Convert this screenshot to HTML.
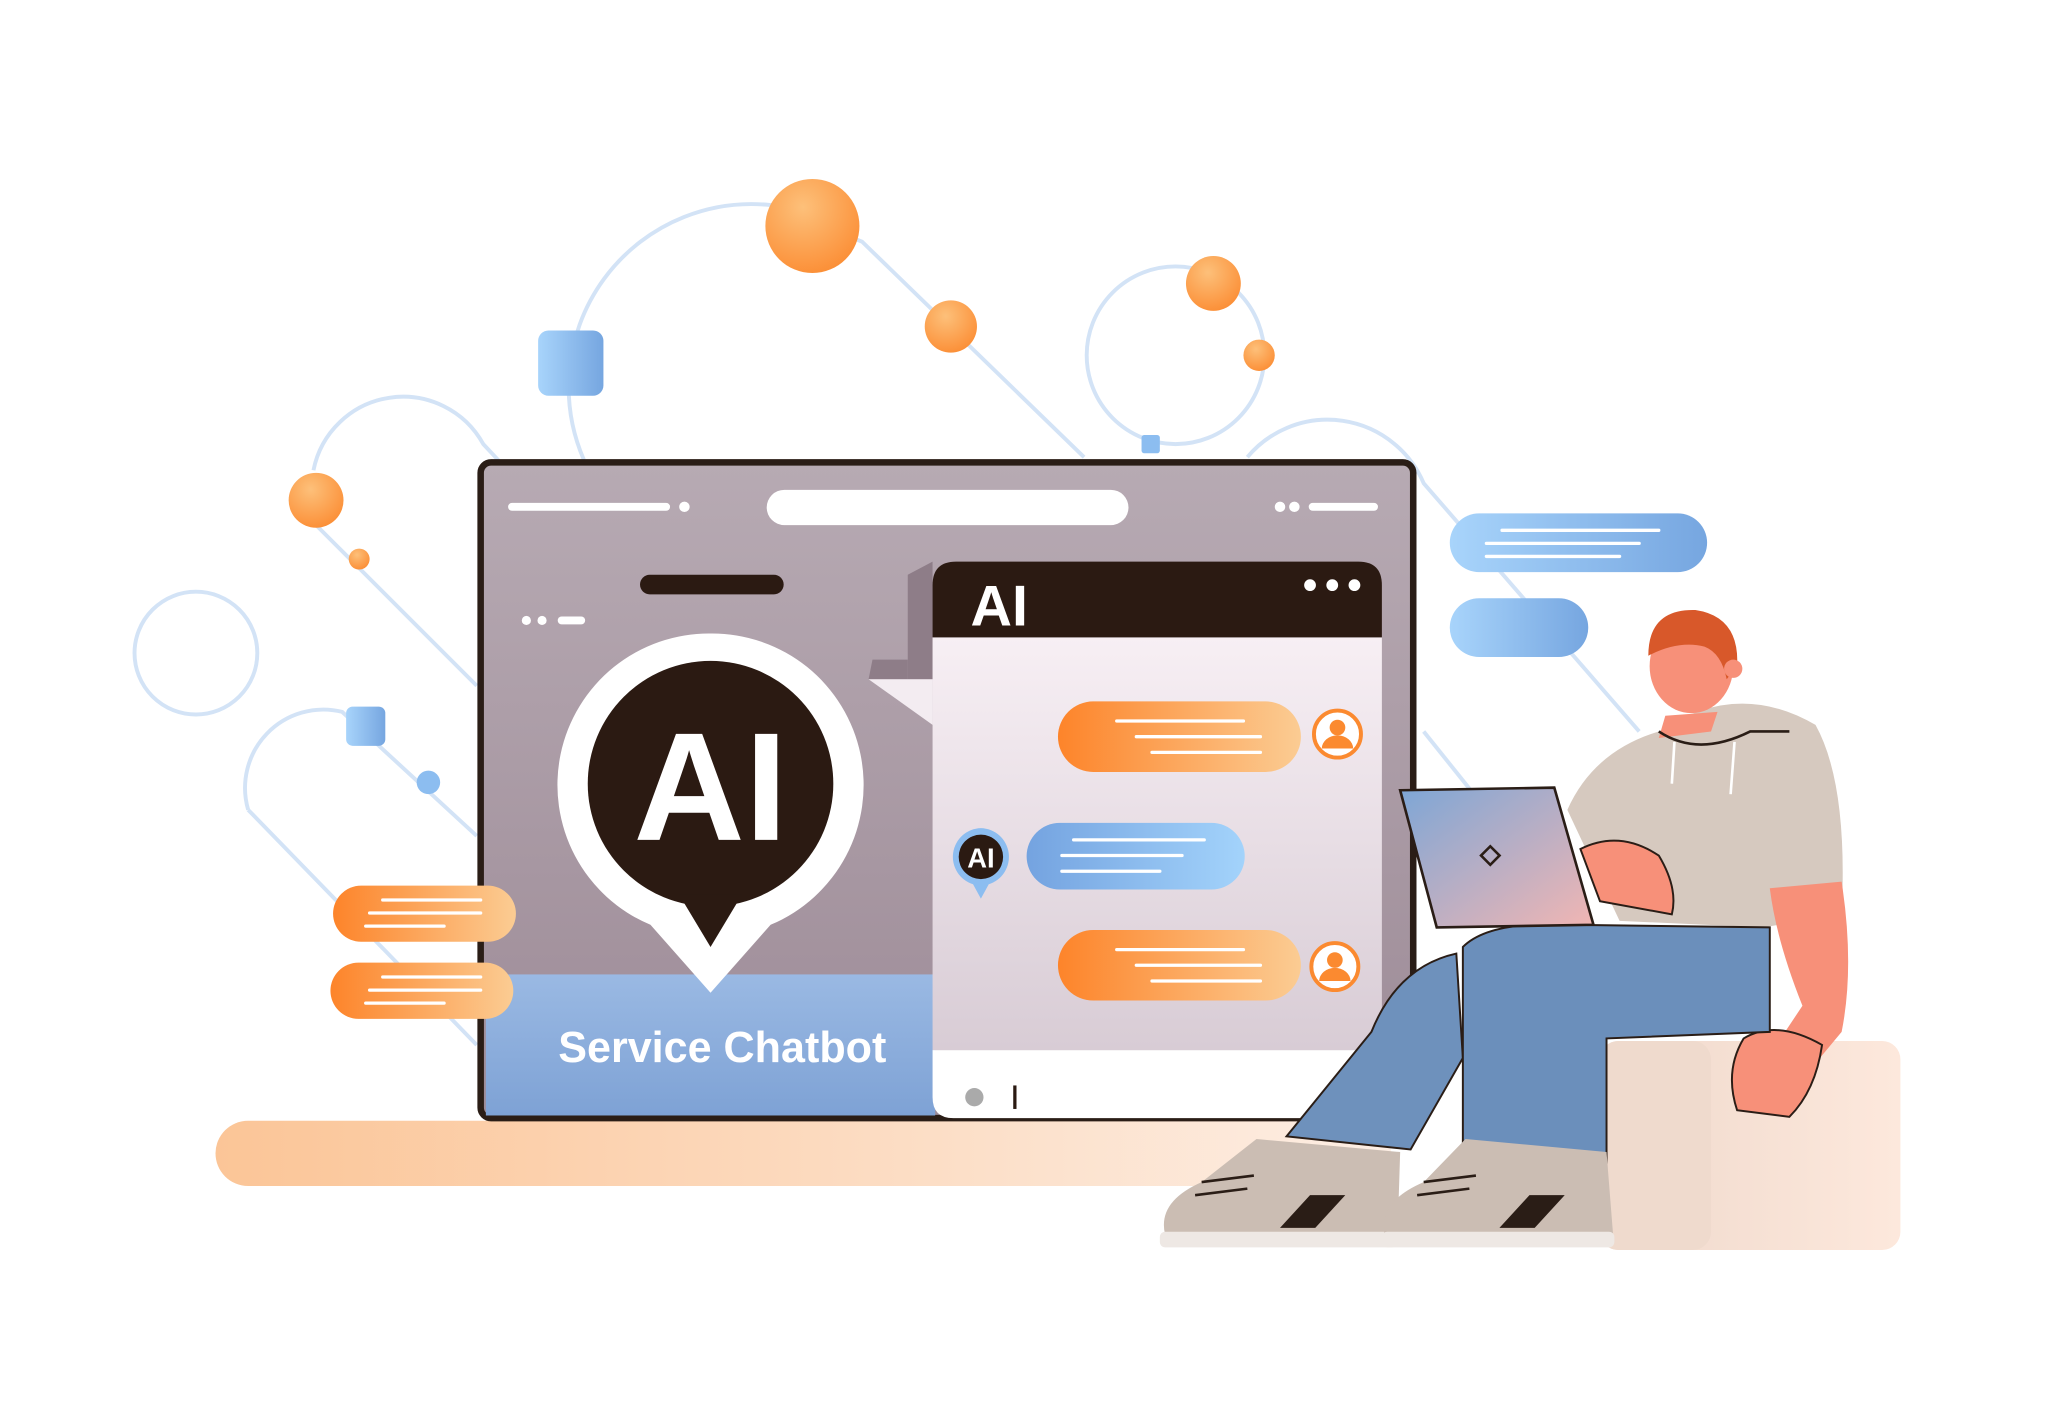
<!DOCTYPE html>
<html><head><meta charset="utf-8"><style>html,body{margin:0;padding:0;background:#fff}svg{display:block}</style></head>
<body>
<svg width="2048" height="1418" viewBox="0 0 1568 1085.6" preserveAspectRatio="none" xmlns="http://www.w3.org/2000/svg">
<defs>
<linearGradient id="floor" x1="0" x2="1"><stop offset="0" stop-color="#fbc597"/><stop offset="1" stop-color="#fdeee4"/></linearGradient>
<linearGradient id="mon" x1="0" y1="0" x2="0" y2="1"><stop offset="0" stop-color="#b7aab3"/><stop offset="1" stop-color="#9d8b97"/></linearGradient>
<linearGradient id="or" x1="0" x2="1"><stop offset="0" stop-color="#fd842a"/><stop offset="1" stop-color="#fbcc93"/></linearGradient>
<linearGradient id="bl" x1="0" x2="1"><stop offset="0" stop-color="#74a3e0"/><stop offset="1" stop-color="#a3d3fb"/></linearGradient>
<linearGradient id="bl2" x1="0" x2="1"><stop offset="0" stop-color="#a8d4fb"/><stop offset="1" stop-color="#76a6e0"/></linearGradient>
<linearGradient id="panel" x1="0" y1="0" x2="0" y2="1"><stop offset="0" stop-color="#9ab9e3"/><stop offset="1" stop-color="#7ea2d5"/></linearGradient>
<linearGradient id="chat" x1="0" y1="0" x2="0" y2="1"><stop offset="0" stop-color="#f7eff4"/><stop offset="1" stop-color="#d8ccd5"/></linearGradient>
<radialGradient id="ball" cx="0.4" cy="0.3" r="0.8"><stop offset="0" stop-color="#fdc07a"/><stop offset="1" stop-color="#fb8a30"/></radialGradient>
<linearGradient id="lap" x1="0" y1="0" x2="1" y2="1"><stop offset="0" stop-color="#7da6d6"/><stop offset="1" stop-color="#f2b6b3"/></linearGradient>
<linearGradient id="seat" x1="0" x2="1"><stop offset="0" stop-color="#efd9cc"/><stop offset="1" stop-color="#fde8dc"/></linearGradient>
</defs>
<g fill="none" stroke="#d3e3f6" stroke-width="3">
<path d="M447 352 A140 140 0 0 1 590 157 L660 185 L830 350"/>
<circle cx="900" cy="272" r="68"/>
<circle cx="150" cy="500" r="47"/>
<path d="M240 360 A70 70 0 0 1 370 340 L445 420"/>
<path d="M240 400 L365 525"/>
<path d="M190 620 A60 60 0 0 1 262 545 L365 640"/>
<path d="M190 620 L365 800"/>
<path d="M955 350 A80 80 0 0 1 1090 370 L1255 560"/>
<path d="M1090 560 L1130 610"/>
</g>
<rect x="165" y="858" width="900" height="50" rx="25" fill="url(#floor)"/>
<circle cx="622" cy="173" r="36" fill="url(#ball)"/>
<circle cx="728" cy="250" r="20" fill="url(#ball)"/>
<circle cx="929" cy="217" r="21" fill="url(#ball)"/>
<circle cx="964" cy="272" r="12" fill="url(#ball)"/>
<circle cx="242" cy="383" r="21" fill="url(#ball)"/>
<circle cx="275" cy="428" r="8" fill="url(#ball)"/>
<rect x="412" y="253" width="50" height="50" rx="8" fill="url(#bl2)"/>
<rect x="265" y="541" width="30" height="30" rx="5" fill="url(#bl2)"/>
<circle cx="328" cy="599" r="9" fill="#8cbdf0"/>
<rect x="874" y="333" width="14" height="14" rx="2" fill="#8cbdf0"/>
<rect x="368" y="354" width="714" height="502" rx="8" fill="url(#mon)" stroke="#2a1d16" stroke-width="5"/>
<line x1="392" y1="388" x2="510" y2="388" stroke="#fff" stroke-width="6" stroke-linecap="round"/>
<circle cx="524" cy="388" r="4" fill="#fff"/>
<rect x="587" y="375" width="277" height="27" rx="13.5" fill="#fff"/>
<circle cx="980" cy="388" r="4" fill="#fff"/><circle cx="991" cy="388" r="4" fill="#fff"/>
<line x1="1005" y1="388" x2="1052" y2="388" stroke="#fff" stroke-width="6" stroke-linecap="round"/>
<rect x="490" y="440" width="110" height="15" rx="7.5" fill="#2b1a12"/>
<circle cx="403" cy="475" r="3.5" fill="#fff"/><circle cx="415" cy="475" r="3.5" fill="#fff"/>
<line x1="430" y1="475" x2="445" y2="475" stroke="#fff" stroke-width="6" stroke-linecap="round"/>
<rect x="372" y="746" width="344" height="108" fill="url(#panel)"/>
<text x="553" y="813" text-anchor="middle" font-family="Liberation Sans, sans-serif" font-weight="bold" font-size="33" fill="#fff">Service Chatbot</text>
<path d="M544 485 A116 116 0 0 1 590 708 L544 760 L498 708 A116 116 0 0 1 544 485Z" fill="#fff"/>
<circle cx="544" cy="600" r="94" fill="#2b1a12"/>
<path d="M520 685 L544 725 L568 685Z" fill="#2b1a12"/>
<text x="544" y="643" text-anchor="middle" font-family="Liberation Sans, sans-serif" font-weight="bold" font-size="118" fill="#fff">AI</text>
<path d="M695 440 L714 430 L714 520 L695 520Z" fill="#8e7d88"/>
<path d="M668 505 L695 505 L695 520 L665 520Z" fill="#8e7d88"/>
<path d="M665 520 L714 520 L714 555Z" fill="#f3ecf1"/>
<rect x="714" y="488" width="344" height="316" fill="url(#chat)"/>
<path d="M714 448 Q714 430 732 430 L1040 430 Q1058 430 1058 448 L1058 488 L714 488Z" fill="#2b1a12"/>
<text x="743" y="479" font-family="Liberation Sans, sans-serif" font-weight="bold" font-size="44" fill="#fff">AI</text>
<circle cx="1003" cy="448" r="4.5" fill="#fff"/><circle cx="1020" cy="448" r="4.5" fill="#fff"/><circle cx="1037" cy="448" r="4.5" fill="#fff"/>
<path d="M714 804 L1058 804 L1058 856 L730 856 Q714 856 714 840Z" fill="#fff"/>
<circle cx="746" cy="840" r="7" fill="#aaa"/>
<line x1="777" y1="831" x2="777" y2="849" stroke="#2b1a12" stroke-width="2.5"/>
<g stroke="#fff" stroke-width="2.5" stroke-linecap="round">
<rect x="810" y="537" width="186" height="54" rx="27" fill="url(#or)" stroke="none"/>
<line x1="855" y1="552" x2="952" y2="552"/><line x1="870" y1="564" x2="965" y2="564"/><line x1="882" y1="576" x2="965" y2="576"/>
<rect x="786" y="630" width="167" height="51" rx="25.5" fill="url(#bl)" stroke="none"/>
<line x1="822" y1="643" x2="922" y2="643"/><line x1="813" y1="655" x2="905" y2="655"/><line x1="813" y1="667" x2="888" y2="667"/>
<rect x="810" y="712" width="186" height="54" rx="27" fill="url(#or)" stroke="none"/>
<line x1="855" y1="727" x2="952" y2="727"/><line x1="870" y1="739" x2="965" y2="739"/><line x1="882" y1="751" x2="965" y2="751"/>
<rect x="255" y="678" width="140" height="43" rx="21.5" fill="url(#or)" stroke="none"/>
<line x1="293" y1="689" x2="368" y2="689"/><line x1="283" y1="699" x2="368" y2="699"/><line x1="280" y1="709" x2="340" y2="709"/>
<rect x="253" y="737" width="140" height="43" rx="21.5" fill="url(#or)" stroke="none"/>
<line x1="293" y1="748" x2="368" y2="748"/><line x1="283" y1="758" x2="368" y2="758"/><line x1="280" y1="768" x2="340" y2="768"/>
<rect x="1110" y="393" width="197" height="45" rx="22.5" fill="url(#bl2)" stroke="none"/>
<line x1="1150" y1="406" x2="1270" y2="406"/><line x1="1138" y1="416" x2="1255" y2="416"/><line x1="1138" y1="426" x2="1240" y2="426"/>
<rect x="1110" y="458" width="106" height="45" rx="22.5" fill="url(#bl2)" stroke="none"/>
</g>
<circle cx="1024" cy="562" r="18" fill="#fff" stroke="#fb8a30" stroke-width="3"/>
<circle cx="1024" cy="557" r="6" fill="#fb8a30"/><path d="M1012 573 A12 10 0 0 1 1036 573" fill="#fb8a30"/>
<circle cx="1022" cy="740" r="18" fill="#fff" stroke="#fb8a30" stroke-width="3"/>
<circle cx="1022" cy="735" r="6" fill="#fb8a30"/><path d="M1010 751 A12 10 0 0 1 1034 751" fill="#fb8a30"/>
<path d="M751 634 A22 22 0 0 1 757 677 L751 688 L745 677 A22 22 0 0 1 751 634Z" fill="#8cbdf0"/>
<circle cx="751" cy="656" r="17" fill="#2b1a12"/>
<text x="751" y="664" text-anchor="middle" font-family="Liberation Sans, sans-serif" font-weight="bold" font-size="21" fill="#fff">AI</text>
<!-- person -->
<rect x="1225" y="797" width="230" height="160" rx="14" fill="url(#seat)"/>
<rect x="1225" y="797" width="85" height="160" rx="14" fill="#efdacd"/>
<path d="M1115 730 Q1070 740 1050 790 L985 870 L1080 880 L1120 810 Z" fill="#6e91bc" stroke="#2a1d16" stroke-width="1.5"/>
<path d="M1270 560 Q1330 520 1390 555 Q1415 600 1410 700 L1350 710 L1240 705 L1200 620 Q1220 575 1270 560Z" fill="#d6c9bf"/>
<path d="M1355 680 L1410 675 Q1420 740 1410 790 L1385 820 L1360 800 L1380 770 Q1360 720 1355 680Z" fill="#f79079"/>
<path d="M1335 795 Q1360 780 1395 800 Q1390 835 1370 855 L1330 850 Q1320 820 1335 795Z" fill="#f79079" stroke="#2a1d16" stroke-width="1.5"/>
<path d="M1120 725 Q1140 705 1200 708 L1355 710 L1355 790 L1230 795 L1230 895 L1120 895 Z" fill="#6b8fbb" stroke="#2a1d16" stroke-width="1.5"/>
<!-- shoes -->
<path d="M962 872 L1072 882 L1070 945 L892 945 Q886 920 920 905 Z" fill="#cbbdb3"/>
<rect x="888" y="943" width="182" height="12" rx="4" fill="#eee8e4"/>
<path d="M1122 872 L1230 882 L1235 945 L1060 945 Q1055 920 1090 905 Z" fill="#cbbdb3"/>
<rect x="1058" y="943" width="178" height="12" rx="4" fill="#eee8e4"/>
<path d="M980 940 L1003 915 L1030 915 L1007 940Z M1148 940 L1171 915 L1198 915 L1175 940Z" fill="#2a1d16"/>
<path d="M920 905 L960 900 M915 915 L955 910" stroke="#2a1d16" stroke-width="2"/>
<path d="M1090 905 L1130 900 M1085 915 L1125 910" stroke="#2a1d16" stroke-width="2"/>
<path d="M1072 605 L1190 603 L1220 708 L1100 710 Z" fill="url(#lap)" stroke="#2a1d16" stroke-width="2"/>
<rect x="1136" y="650" width="10" height="10" fill="none" stroke="#2a1d16" stroke-width="2" transform="rotate(45 1141 655)"/>
<path d="M1210 650 Q1240 635 1270 655 Q1285 680 1280 700 L1225 690 Z" fill="#f79079" stroke="#2a1d16" stroke-width="1.5"/>
<path d="M1270 565 L1310 560 L1315 545 L1275 548Z" fill="#f79079"/>
<ellipse cx="1295" cy="510" rx="32" ry="36" fill="#f79079"/>
<path d="M1262 502 Q1262 466 1298 467 Q1332 472 1330 510 L1322 520 Q1318 500 1305 495 Q1285 490 1262 502 Z" fill="#d8582a"/>
<circle cx="1327" cy="512" r="7" fill="#f79079"/>
<path d="M1270 560 Q1300 580 1340 560 L1370 560" fill="none" stroke="#2a1d16" stroke-width="2"/>
<line x1="1282" y1="568" x2="1280" y2="600" stroke="#fff" stroke-width="2"/>
<line x1="1328" y1="568" x2="1325" y2="608" stroke="#fff" stroke-width="2"/>
</svg>
</body></html>
